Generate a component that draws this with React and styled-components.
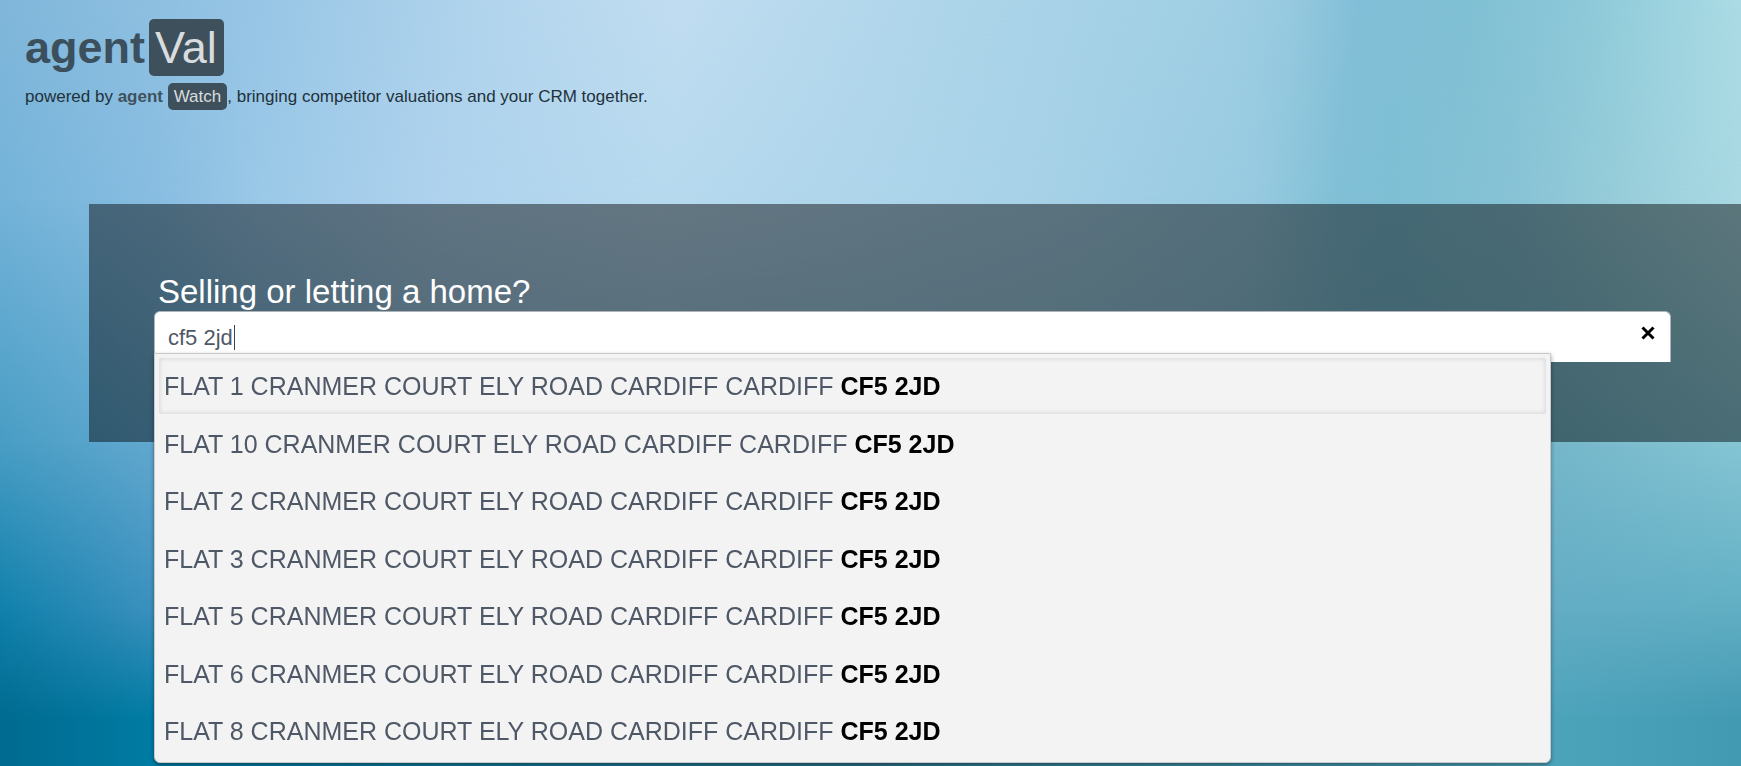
import React, { useLayoutEffect, useRef, useState } from 'react'
import styled, { createGlobalStyle } from 'styled-components'

const GlobalStyle = createGlobalStyle`
    * {
        box-sizing: border-box;
    }
    body {
        margin: 0;
        font-family: "Liberation Sans", Arial, sans-serif;
        font-size: 17px;
        color: #22313b;
        overflow-x: hidden;
    }
`

const Page = styled.div`
    min-height: 100vh;
    position: relative;
    isolation: isolate;
`

// one horizontal band of the backdrop, faded into the band above it
const Band = styled.div`
    position: absolute;
    inset: 0;
    z-index: -1;
    background: linear-gradient(to right, ${props => props.$colors});
    mask-image: ${props => props.$fade ? `linear-gradient(${props.$fade})` : 'none'};
`

const Header = styled.header`
    padding: 19px 25px 0;
`
const Title = styled.h1`
    display: flex;
    align-items: center;
    gap: 4px;
    margin: 0;
    font-size: 45px;
    line-height: 57px;
    color: #3b4f5d;
`
const TitleBadge = styled.span`
    padding: 0 7px 0 6px;
    border-radius: 5px;
    font-weight: 400;
    color: #d9dcde;
    background-color: #3f505d;
`
const Tagline = styled.p`
    margin: 7px 0 0;
    line-height: 27px;
`
const Brand = styled.b`
    color: #3f515e;
`
const Badge = styled.span`
    display: inline-block;
    padding: 0 6px;
    border-radius: 5px;
    color: #d9dcde;
    background-color: #3f505d;
`

const Search = styled.section`
    margin: 94px 0 0 89px;
    padding: 69px 70px 80px 65px;
    background-color: rgba(0, 0, 0, 0.45);
`
const Heading = styled.label`
    display: block;
    padding-left: 4px;
    font-size: 33px;
    line-height: 38px;
    color: white;
`
const Field = styled.div`
    display: flex;
    position: relative;
    height: 51px;
    border: 1px solid #b0b4b8;
    border-bottom: none;
    border-radius: 6px 6px 0 0;
    background-color: white;
`
const Input = styled.input`
    flex: 1;
    min-width: 0;
    padding: 2px 13px 0;
    border: none;
    outline: none;
    background: transparent;
    font-family: inherit;
    font-size: 22px;
    color: #4f5866;
    caret-color: transparent;
`
const Caret = styled.span`
    position: absolute;
    top: 13px;
    left: 14px;
    width: 1px;
    height: 25px;
    background-color: #3a4656;
    pointer-events: none;
`
const Clear = styled.button`
    display: flex;
    align-items: center;
    justify-content: center;
    width: 44px;
    height: 42px;
    padding: 0;
    border: none;
    background: transparent;
    color: black;
    cursor: pointer;
`
const Dropdown = styled.ul`
    position: absolute;
    top: 41px;
    left: -1px;
    right: 119px;
    display: grid;
    grid-auto-rows: 1fr;
    min-height: 410px;
    margin: 0;
    padding: 4px 4px 1px;
    list-style: none;
    border: 1px solid #c8cacc;
    border-radius: 0 0 6px 6px;
    background-color: #f3f3f3;
    box-shadow: 0 2px 4px rgba(0, 0, 0, 0.4);
`
const Option = styled.li`
    margin-bottom: 2px;
    padding: 1px 5px 0;
    border-radius: 3px;
    font-size: 25px;
    line-height: 54px;
    color: #4f5866;
    cursor: pointer;
    box-shadow: ${props => props.$active ? 'inset 0 0 5px rgba(40, 60, 90, 0.2)' : 'none'};
`
const Match = styled.b`
    color: black;
`

const bands = [
    { colors: '#80b7da 0%, #98c6e6 15%, #b2d5ed 28%, #c1ddf1 39%, #add5ea 55%, #a0cfe4 70%, #97cae0 74%, #82bfd8 78%, #80c0d4 84%, #8dc9d9 91%, #abdce5 100%' },
    { colors: '#74b3d9 0%, #88bde1 9%, #9ac8e7 15%, #aed2ed 25%, #b6d9ee 38%, #a6d1e7 60%, #97cae0 72%, #80bfd5 77%, #7ebfd4 80%, #87c2d5 87%, #97cdd9 93%, #a9d9e3 100%', fade: 'to bottom, transparent 0, black 26%' },
    { colors: '#489dc4 0%, #62a8d0 9%, #8fbfd8 25%, #93c2da 50%, #8abfd4 68%, #74b6c9 80%, #76b8cb 90%, #85c5d4 100%', fade: 'to bottom, transparent 26%, black 58%' },
    { colors: '#0f80ab 0%, #3b90bd 9%, #5aa7c4 50%, #63acc4 88%, #60aec3 100%', fade: 'to bottom, transparent 58%, black 80%' },
    { colors: '#006a8f 0%, #007ca4 9%, #2b6f86 50%, #4ca4bb 89%, #4299b2 100%', fade: 'to bottom, transparent 80%, black 94%' },
]

const flats = [1, 10, 2, 3, 5, 6, 8]

const App = () => {
    const [query, setQuery] = useState('cf5 2jd')
    const [active, setActive] = useState(0)
    const [caret, setCaret] = useState(0)
    const input = useRef(null)

    // keep the caret right behind the typed text
    useLayoutEffect(() => {
        const ctx = document.createElement('canvas').getContext('2d')
        const { fontSize, fontFamily } = getComputedStyle(input.current)
        ctx.font = `${fontSize} ${fontFamily}`
        setCaret(Math.round(ctx.measureText(query).width))
    }, [query])

    return (
        <Page>
            <GlobalStyle />
            {bands.map((band, i) => (
                <Band key={i} $colors={band.colors} $fade={band.fade} />
            ))}
            <Header>
                <Title>agent<TitleBadge>Val</TitleBadge></Title>
                <Tagline>
                    powered by <Brand>agent</Brand> <Badge>Watch</Badge>, bringing competitor valuations and your CRM together.
                </Tagline>
            </Header>
            <Search>
                <Heading htmlFor='address'>Selling or letting a home?</Heading>
                <Field>
                    <Input ref={input} id='address' autoFocus autoComplete='off' value={query} onChange={(e) => setQuery(e.target.value)} />
                    <Caret style={{ marginLeft: caret }} />
                    <Clear type='button' aria-label='Clear' onClick={() => setQuery('')}>
                        <svg width='14' height='14' viewBox='0 0 14 14' stroke='currentColor' strokeWidth='3'>
                            <path d='M1.5 1.5 L12.5 12.5 M12.5 1.5 L1.5 12.5' />
                        </svg>
                    </Clear>
                    {query && (
                        <Dropdown>
                            {flats.map((flat, i) => (
                                <Option key={flat} $active={i === active} onMouseEnter={() => setActive(i)}>
                                    FLAT {flat} CRANMER COURT ELY ROAD CARDIFF CARDIFF <Match>CF5 2JD</Match>
                                </Option>
                            ))}
                        </Dropdown>
                    )}
                </Field>
            </Search>
        </Page>
    )
}

export default App
